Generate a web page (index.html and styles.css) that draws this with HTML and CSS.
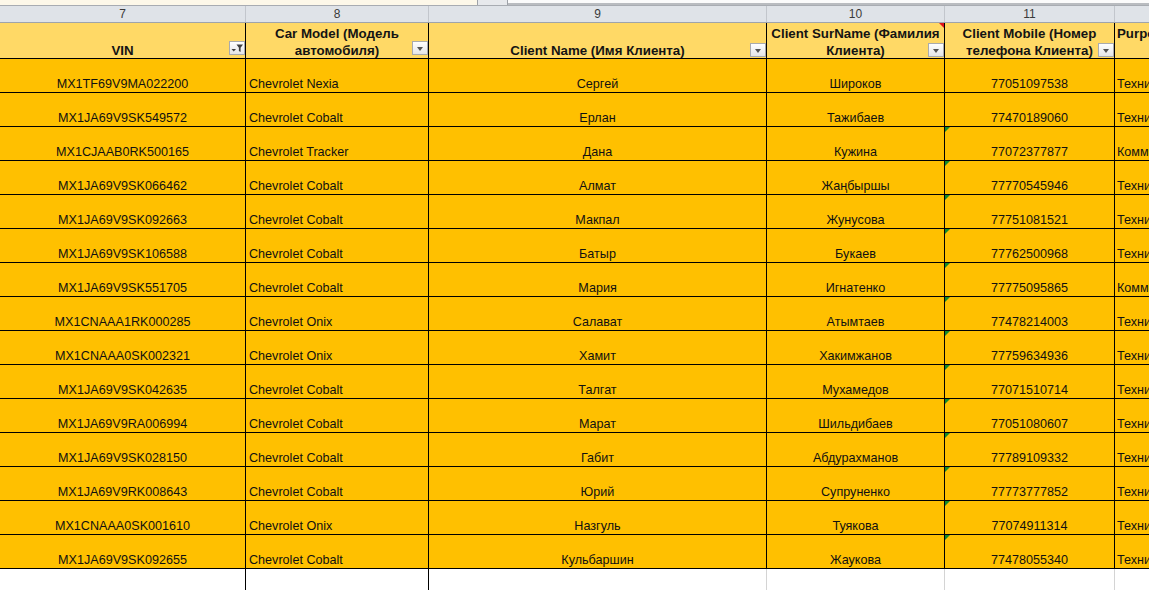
FILE: index.html
```html
<!DOCTYPE html>
<html lang="ru">
<head>
<meta charset="utf-8">
<title>Sheet</title>
<link rel="stylesheet" href="styles.css">
</head>
<body>
<div class="topstrip">
  <div class="ts-left"></div>
  <div class="ts-box"></div>
  <div class="ts-right"></div>
</div>
<div class="sheet">
  <div class="row colnums">
    <div class="cn">7</div><div class="cn">8</div><div class="cn">9</div><div class="cn">10</div><div class="cn">11</div><div class="cn">12</div>
  </div>
  <div class="row head">
    <div class="hc"><span class="ht">VIN</span><span class="fbtn filtered low"><svg width="14" height="12" viewBox="0 0 14 12"><path d="M6.5 2.5h6.5l-2.4 3.2v4.3l-1.7-1.1V5.7z" fill="#3f3f3f"/><path d="M1.5 7h4.5l-2.25 2.6z" fill="#3f3f3f"/></svg></span></div>
    <div class="hc"><span class="ht">Car Model (Модель автомобиля)</span><span class="fbtn dd low"></span></div>
    <div class="hc"><span class="ht">Client Name (Имя Клиента)</span><span class="fbtn dd"></span></div>
    <div class="hc note"><span class="ht">Client SurName (Фамилия Клиента)</span><span class="fbtn dd"></span></div>
    <div class="hc"><span class="ht">Client Mobile (Номер телефона Клиента)</span><span class="fbtn dd"></span></div>
    <div class="hc left"><span class="ht">Purpose of Visit (Цель визита)</span><span class="fbtn dd"></span></div>
  </div>

  <div class="row data"><div class="c">MX1TF69V9MA022200</div><div class="c l">Chevrolet Nexia</div><div class="c">Сергей</div><div class="c">Широков</div><div class="c">77051097538</div><div class="c p">Техническое обслуживание</div></div>
  <div class="row data"><div class="c">MX1JA69V9SK549572</div><div class="c l">Chevrolet Cobalt</div><div class="c">Ерлан</div><div class="c">Тажибаев</div><div class="c">77470189060</div><div class="c p">Техническое обслуживание</div></div>
  <div class="row data"><div class="c">MX1CJAAB0RK500165</div><div class="c l">Chevrolet Tracker</div><div class="c">Дана</div><div class="c">Кужина</div><div class="c g">77072377877</div><div class="c p">Коммерческий ремонт</div></div>
  <div class="row data"><div class="c">MX1JA69V9SK066462</div><div class="c l">Chevrolet Cobalt</div><div class="c">Алмат</div><div class="c">Жаңбыршы</div><div class="c g">77770545946</div><div class="c p">Техническое обслуживание</div></div>
  <div class="row data"><div class="c">MX1JA69V9SK092663</div><div class="c l">Chevrolet Cobalt</div><div class="c">Макпал</div><div class="c">Жунусова</div><div class="c g">77751081521</div><div class="c p">Техническое обслуживание</div></div>
  <div class="row data"><div class="c">MX1JA69V9SK106588</div><div class="c l">Chevrolet Cobalt</div><div class="c">Батыр</div><div class="c">Букаев</div><div class="c g">77762500968</div><div class="c p">Техническое обслуживание</div></div>
  <div class="row data"><div class="c">MX1JA69V9SK551705</div><div class="c l">Chevrolet Cobalt</div><div class="c">Мария</div><div class="c">Игнатенко</div><div class="c g">77775095865</div><div class="c p">Коммерческий ремонт</div></div>
  <div class="row data"><div class="c">MX1CNAAA1RK000285</div><div class="c l">Chevrolet Onix</div><div class="c">Салават</div><div class="c">Атымтаев</div><div class="c g">77478214003</div><div class="c p">Техническое обслуживание</div></div>
  <div class="row data"><div class="c">MX1CNAAA0SK002321</div><div class="c l">Chevrolet Onix</div><div class="c">Хамит</div><div class="c">Хакимжанов</div><div class="c g">77759634936</div><div class="c p">Техническое обслуживание</div></div>
  <div class="row data"><div class="c">MX1JA69V9SK042635</div><div class="c l">Chevrolet Cobalt</div><div class="c">Талгат</div><div class="c">Мухамедов</div><div class="c g">77071510714</div><div class="c p">Техническое обслуживание</div></div>
  <div class="row data"><div class="c">MX1JA69V9RA006994</div><div class="c l">Chevrolet Cobalt</div><div class="c">Марат</div><div class="c">Шильдибаев</div><div class="c g">77051080607</div><div class="c p">Техническое обслуживание</div></div>
  <div class="row data"><div class="c">MX1JA69V9SK028150</div><div class="c l">Chevrolet Cobalt</div><div class="c">Габит</div><div class="c">Абдурахманов</div><div class="c g">77789109332</div><div class="c p">Техническое обслуживание</div></div>
  <div class="row data"><div class="c">MX1JA69V9RK008643</div><div class="c l">Chevrolet Cobalt</div><div class="c">Юрий</div><div class="c">Супруненко</div><div class="c g">77773777852</div><div class="c p">Техническое обслуживание</div></div>
  <div class="row data"><div class="c">MX1CNAAA0SK001610</div><div class="c l">Chevrolet Onix</div><div class="c">Назгуль</div><div class="c">Туякова</div><div class="c g">77074911314</div><div class="c p">Техническое обслуживание</div></div>
  <div class="row data"><div class="c">MX1JA69V9SK092655</div><div class="c l">Chevrolet Cobalt</div><div class="c">Кульбаршин</div><div class="c">Жаукова</div><div class="c g">77478055340</div><div class="c p">Техническое обслуживание</div></div>

  <div class="row blank"><div class="b dark"></div><div class="b dark"></div><div class="b"></div><div class="b"></div><div class="b"></div><div class="b"></div></div>
</div>
</body>
</html>
```

FILE: styles.css
```css
html, body {
  margin: 0;
  padding: 0;
  background: #ffffff;
  overflow: hidden;
}
body {
  width: 1149px;
  height: 590px;
  font-family: "Liberation Sans", Arial, sans-serif;
  color: #111111;
}

/* top strip (bottom of formula area) */
.topstrip {
  display: flex;
  height: 6px;
  box-sizing: border-box;
  border-bottom: 1px solid #a8acb2;
}
.ts-left {
  flex: 0 0 477px;
  background: #fdf8e9;
  border-right: 1px solid #9ea2a8;
}
.ts-box {
  flex: 0 0 29px;
  background: #e7e9ec;
  border-right: 1px solid #9ea2a8;
}
.ts-right {
  flex: 1;
  background: #fbfbfb;
  border-bottom: 2px solid #b9bcc0;
  height: 3px;
}

.sheet {
  width: 1315px;
}
.row {
  display: grid;
  grid-template-columns: 246px 183px 338px 178px 170px 200px;
}
.row > div {
  box-sizing: border-box;
  position: relative;
}

/* column number bar */
.colnums {
  height: 17px;
  background: #dfe3e8;
  border-bottom: 1px solid #9fa4ab;
  box-sizing: border-box;
}
.cn {
  border-right: 1px solid #c2c6cc;
  text-align: center;
  font-size: 12px;
  line-height: 16px;
  color: #3a3a3a;
}

/* header */
.head {
  height: 36px;
}
.hc {
  background: #ffd966;
  border-right: 1px solid #000;
  border-bottom: 1px solid #000;
  display: flex;
  align-items: flex-end;
  justify-content: center;
  text-align: center;
  font-weight: bold;
  font-size: 13.3px;
  line-height: 17px;
  padding: 0 1px;
  color: #141414;
}
.ht {
  margin-bottom: -1px;
}
.hc.left {
  justify-content: flex-start;
  padding-left: 2px;
  padding-right: 20px;
}
.hc.left .ht {
  text-align: left;
  text-align-last: right;
}
.note::before {
  content: "";
  position: absolute;
  right: 0;
  top: 0;
  border-top: 5px solid #e0141a;
  border-left: 5px solid transparent;
}

/* autofilter buttons */
.fbtn {
  position: absolute;
  right: 0;
  bottom: 1px;
  width: 16px;
  height: 14px;
  box-sizing: border-box;
  border: 1px solid #a9abae;
  background: linear-gradient(#ffffff, #e4e5e7);
  display: flex;
  align-items: center;
  justify-content: center;
}
.fbtn.low {
  bottom: 3px;
}
.fbtn.dd::after {
  content: "";
  border-left: 3.5px solid transparent;
  border-right: 3.5px solid transparent;
  border-top: 4px solid #555;
  margin-top: 2px;
}

/* data rows */
.data {
  height: 34px;
}
.c {
  background: #ffc000;
  border-right: 1px solid #000;
  border-bottom: 1px solid #000;
  display: flex;
  align-items: flex-end;
  justify-content: center;
  font-size: 12.6px;
  line-height: 16px;
  white-space: nowrap;
  overflow: hidden;
}
.c.l {
  justify-content: flex-start;
  padding-left: 3px;
  line-height: 15px;
}
.c.p {
  justify-content: flex-start;
  padding-left: 2px;
  line-height: 15px;
}
.c.g::before {
  content: "";
  position: absolute;
  left: 0;
  top: 0;
  border-top: 5px solid #128a2c;
  border-right: 5px solid transparent;
}

/* empty area */
.blank {
  height: 40px;
}
.b {
  border-right: 1px solid #d4d4d4;
  border-bottom: 1px solid #d4d4d4;
}
.b.dark {
  border-right-color: #000;
}
```
